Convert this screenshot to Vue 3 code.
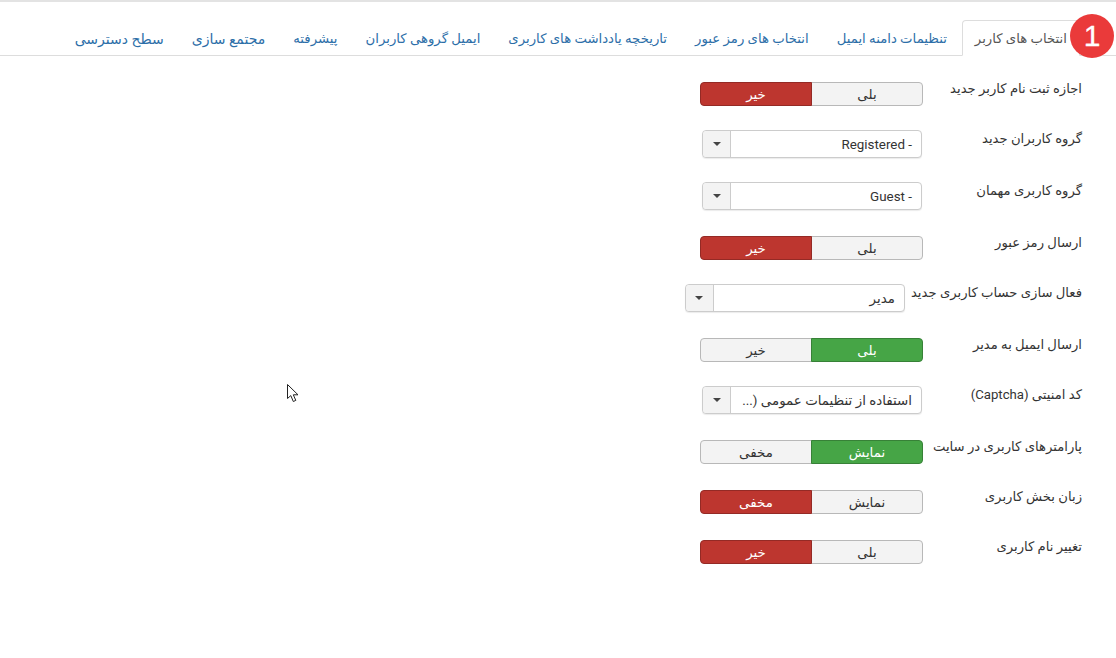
<script setup>
const tabs = [
  'انتخاب های کاربر',
  'تنظیمات دامنه ایمیل',
  'انتخاب های رمز عبور',
  'تاریخچه یادداشت های کاربری',
  'ایمیل گروهی کاربران',
  'پیشرفته',
  'مجتمع سازی',
  'سطح دسترسی'
]

const rows = [
  { label: 'اجازه ثبت نام کاربر جدید', type: 'switch', yes: 'بلی', no: 'خیر', on: false },
  { label: 'گروه کاربران جدید', type: 'select', value: '- Registered' },
  { label: 'گروه کاربری مهمان', type: 'select', value: '- Guest' },
  { label: 'ارسال رمز عبور', type: 'switch', yes: 'بلی', no: 'خیر', on: false },
  { label: 'فعال سازی حساب کاربری جدید', type: 'select', value: 'مدیر' },
  { label: 'ارسال ایمیل به مدیر', type: 'switch', yes: 'بلی', no: 'خیر', on: true },
  { label: 'کد امنیتی (Captcha)', type: 'select', value: 'استفاده از تنظیمات عمومی (...' },
  { label: 'پارامترهای کاربری در سایت', type: 'switch', yes: 'نمایش', no: 'مخفی', on: true },
  { label: 'زبان بخش کاربری', type: 'switch', yes: 'نمایش', no: 'مخفی', on: false },
  { label: 'تغییر نام کاربری', type: 'switch', yes: 'بلی', no: 'خیر', on: false }
]
</script>

<template>
  <div class="page" dir="rtl">
    <ul class="tabs">
      <li v-for="(tab, i) in tabs" :key="tab" class="tab" :class="{ active: i === 0 }">{{ tab }}</li>
    </ul>

    <div class="form">
      <div v-for="row in rows" :key="row.label" class="row">
        <label class="label">{{ row.label }}</label>
        <div v-if="row.type === 'switch'" class="switch">
          <span class="half" :class="{ green: row.on }">{{ row.yes }}</span>
          <span class="half" :class="{ red: !row.on }">{{ row.no }}</span>
        </div>
        <div v-else class="select">
          <span class="value">{{ row.value }}</span>
          <span class="arrow"><i class="caret"></i></span>
        </div>
      </div>
    </div>

    <div class="badge">1</div>

    <svg class="cursor" width="14" height="20" viewBox="0 0 14 20">
      <path d="M1.5 1.5V15.5L4.8 12.6L7.3 18.5L9.8 17.4L7.3 11.8H12L1.5 1.5Z" fill="#fff" stroke="#222" stroke-width="1" />
    </svg>
  </div>
</template>

<style>
html, body {
  margin: 0;
  background: #fff;
}
</style>

<style scoped>
.page {
  position: relative;
  width: 1116px;
  height: 658px;
  overflow: hidden;
  box-sizing: border-box;
  border-top: 2px solid #e3e3e3;
  font-family: Roboto, "DejaVu Sans", sans-serif;
  font-size: 13.4px;
  color: #333;
}

.tabs {
  display: flex;
  height: 54px;
  box-sizing: border-box;
  margin: 0;
  padding: 18px 36px 0 0;
  list-style: none;
  border-bottom: 1px solid #ddd;
}

.tab {
  height: 35px;
  box-sizing: border-box;
  margin-left: 2px;
  padding: 9px 12px;
  border: 1px solid transparent;
  border-radius: 4px 4px 0 0;
  font-size: 13.25px;
  line-height: 18px;
  color: #2c6ea8;
  white-space: nowrap;
}

.tab:nth-last-child(-n+2) {
  font-size: 14px;
}

.tab.active {
  height: 36px;
  border-color: #ddd #ddd #fff;
  background: #fff;
  color: #555;
}

.form {
  padding: 24px 34px 0 0;
}

.row {
  display: flex;
  align-items: flex-start;
  margin-bottom: 20px;
}

.label {
  box-sizing: border-box;
  min-width: 160px;
  padding-left: 6px;
  font-size: 13.2px;
  line-height: 18px;
  white-space: nowrap;
  color: #333;
}

.switch {
  display: flex;
  width: 223px;
  height: 24px;
  margin-top: 2px;
  margin-bottom: 4px;
  margin-right: -1px;
}

.half {
  flex: 1;
  box-sizing: border-box;
  border: 1px solid #b8b8b8;
  background: #f3f3f3;
  line-height: 23px;
  text-align: center;
  color: #333;
}

.half:first-child {
  border-radius: 0 4px 4px 0;
}

.half:last-child {
  margin-right: -1px;
  border-radius: 4px 0 0 4px;
}

.half.green {
  position: relative;
  background: #46a546;
  border-color: #378137;
  color: #fff;
}

.half.red {
  position: relative;
  background: #bd362f;
  border-color: #942a25;
  color: #fff;
}

.select {
  display: flex;
  width: 220px;
  height: 28px;
  margin-bottom: 4px;
  box-sizing: border-box;
  border: 1px solid #ccc;
  border-radius: 4px;
  background: #fff;
  line-height: 27px;
  box-shadow: 0 1px 1px rgba(0, 0, 0, 0.08);
}

.value {
  flex: 1;
  padding-right: 9px;
  white-space: nowrap;
  overflow: hidden;
}

.arrow {
  display: flex;
  align-items: center;
  justify-content: center;
  width: 27px;
  background: #f3f3f3;
  border-right: 1px solid #ccc;
  border-radius: 4px 0 0 4px;
}

.caret {
  width: 0;
  height: 0;
  border-top: 4px solid #444;
  border-left: 4px solid transparent;
  border-right: 4px solid transparent;
}

.badge {
  position: absolute;
  left: 1070px;
  top: 12px;
  width: 44px;
  height: 44px;
  border-radius: 50%;
  background: #ea3a3a;
  color: #fff;
  font-family: "Liberation Sans", sans-serif;
  font-size: 30px;
  line-height: 43px;
  text-align: center;
  -webkit-text-stroke: 0.3px #fff;
}

.cursor {
  position: absolute;
  left: 286px;
  top: 381px;
}
</style>
